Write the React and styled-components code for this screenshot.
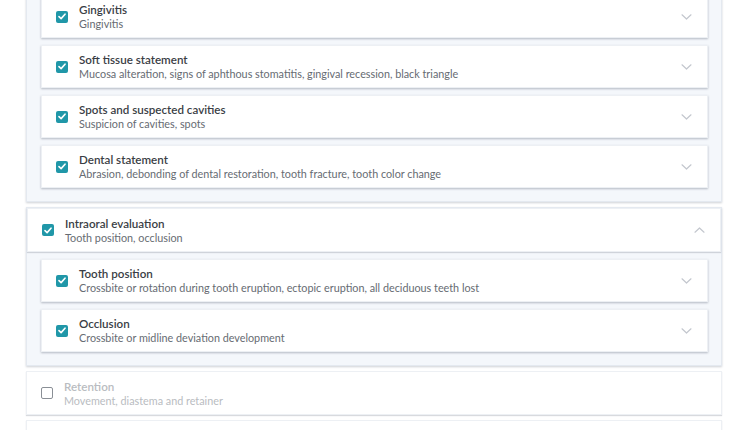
import React from 'react'
import styled, { createGlobalStyle } from 'styled-components'

const Global = createGlobalStyle`
  html, body {
    margin: 0;
    padding: 0;
    background: #ffffff;
    font-family: Lato, "Open Sans", sans-serif;
    overflow: hidden;
  }
`

const Page = styled.div`
  width: 750px;
  height: 430px;
  overflow: hidden;
  padding: 0 28px 0 26px;
  box-sizing: border-box;
`

const Stack = styled.div`
  display: flex;
  flex-direction: column;
  gap: 5px;
  margin-top: -5px;
`

const Group = styled.div`
  background: #f4f7fb;
  border: 1px solid #e4e9f0;
  border-top: ${p => (p.$clipped ? 'none' : '1px solid #e4e9f0')};
  box-shadow: 0 1px 2px rgba(60, 70, 90, 0.25);
  display: flex;
  flex-direction: column;
`

const GroupBody = styled.div`
  display: flex;
  flex-direction: column;
  gap: 7px;
  padding: ${p => (p.$top ? '0' : '7px')} 13px 13px 14px;
`

const Card = styled.div`
  background: #ffffff;
  height: ${p => (p.$tall ? '44px' : '43px')};
  box-sizing: border-box;
  display: flex;
  align-items: center;
  padding: 0 15px 0 14px;
  border: 1px solid #edf0f4;
  box-shadow: ${p => (p.$flat ? '0 1px 1px rgba(60, 70, 90, 0.2)' : '0 1px 2px rgba(60, 70, 90, 0.35)')};
`

const Box = styled.span`
  width: 12px;
  height: 12px;
  border-radius: 2px;
  box-sizing: border-box;
  flex: none;
  display: flex;
  align-items: center;
  justify-content: center;
  background: ${p => (p.$on ? '#2097a8' : '#ffffff')};
  border: ${p => (p.$on ? 'none' : '1.5px solid #8a8f96')};
`

const Texts = styled.div`
  flex: 1;
  margin-left: 11px;
  display: flex;
  flex-direction: column;
`

const Title = styled.div`
  font-size: 11.6px;
  font-weight: 600;
  color: ${p => (p.$off ? '#b9bcc1' : '#3a3e45')};
  line-height: 14px;
`

const Sub = styled.div`
  font-size: 10.8px;
  color: ${p => (p.$off ? '#b9bcc1' : '#666b72')};
  line-height: 13px;
`

const Chevron = ({ up }) => (
  <svg width="11" height="6" viewBox="0 0 11 6" style={{ flex: 'none' }}>
    <path
      d={up ? 'M1 5.2 L5.5 1 L10 5.2' : 'M1 0.8 L5.5 5 L10 0.8'}
      fill="none"
      stroke="#c3c7ce"
      strokeWidth="1.2"
      strokeLinecap="round"
      strokeLinejoin="round"
    />
  </svg>
)

const Check = ({ on }) => (
  <Box $on={on}>
    {on && (
      <svg width="8" height="7" viewBox="0 0 8 7">
        <path d="M1 3.6 L3.1 5.6 L7 1.2" fill="none" stroke="#ffffff" strokeWidth="1.6" strokeLinecap="round" strokeLinejoin="round" />
      </svg>
    )}
  </Box>
)

const Item = ({ title, sub, on = true, off, up, chevron = true, ...rest }) => (
  <Card {...rest}>
    <Check on={on} />
    <Texts>
      <Title $off={off}>{title}</Title>
      <Sub $off={off}>{sub}</Sub>
    </Texts>
    {chevron && <Chevron up={up} />}
  </Card>
)

const topItems = [
  ['Gingivitis', 'Gingivitis'],
  ['Soft tissue statement', 'Mucosa alteration, signs of aphthous stomatitis, gingival recession, black triangle'],
  ['Spots and suspected cavities', 'Suspicion of cavities, spots'],
  ['Dental statement', 'Abrasion, debonding of dental restoration, tooth fracture, tooth color change'],
]

const intraItems = [
  ['Tooth position', 'Crossbite or rotation during tooth eruption, ectopic eruption, all deciduous teeth lost'],
  ['Occlusion', 'Crossbite or midline deviation development'],
]

export default function App() {
  return (
    <Page>
      <Global />
      <Stack>
        <Group $clipped>
          <GroupBody $top>
            {topItems.map(([t, s]) => (
              <Item key={t} title={t} sub={s} />
            ))}
          </GroupBody>
        </Group>
        <Group>
          <Item title="Intraoral evaluation" sub="Tooth position, occlusion" up $tall $flat />
          <GroupBody>
            {intraItems.map(([t, s]) => (
              <Item key={t} title={t} sub={s} />
            ))}
          </GroupBody>
        </Group>
        <Item title="Retention" sub="Movement, diastema and retainer" on={false} off chevron={false} $tall $flat />
        <Item title="" sub="" on={false} chevron={false} $tall $flat />
      </Stack>
    </Page>
  )
}
